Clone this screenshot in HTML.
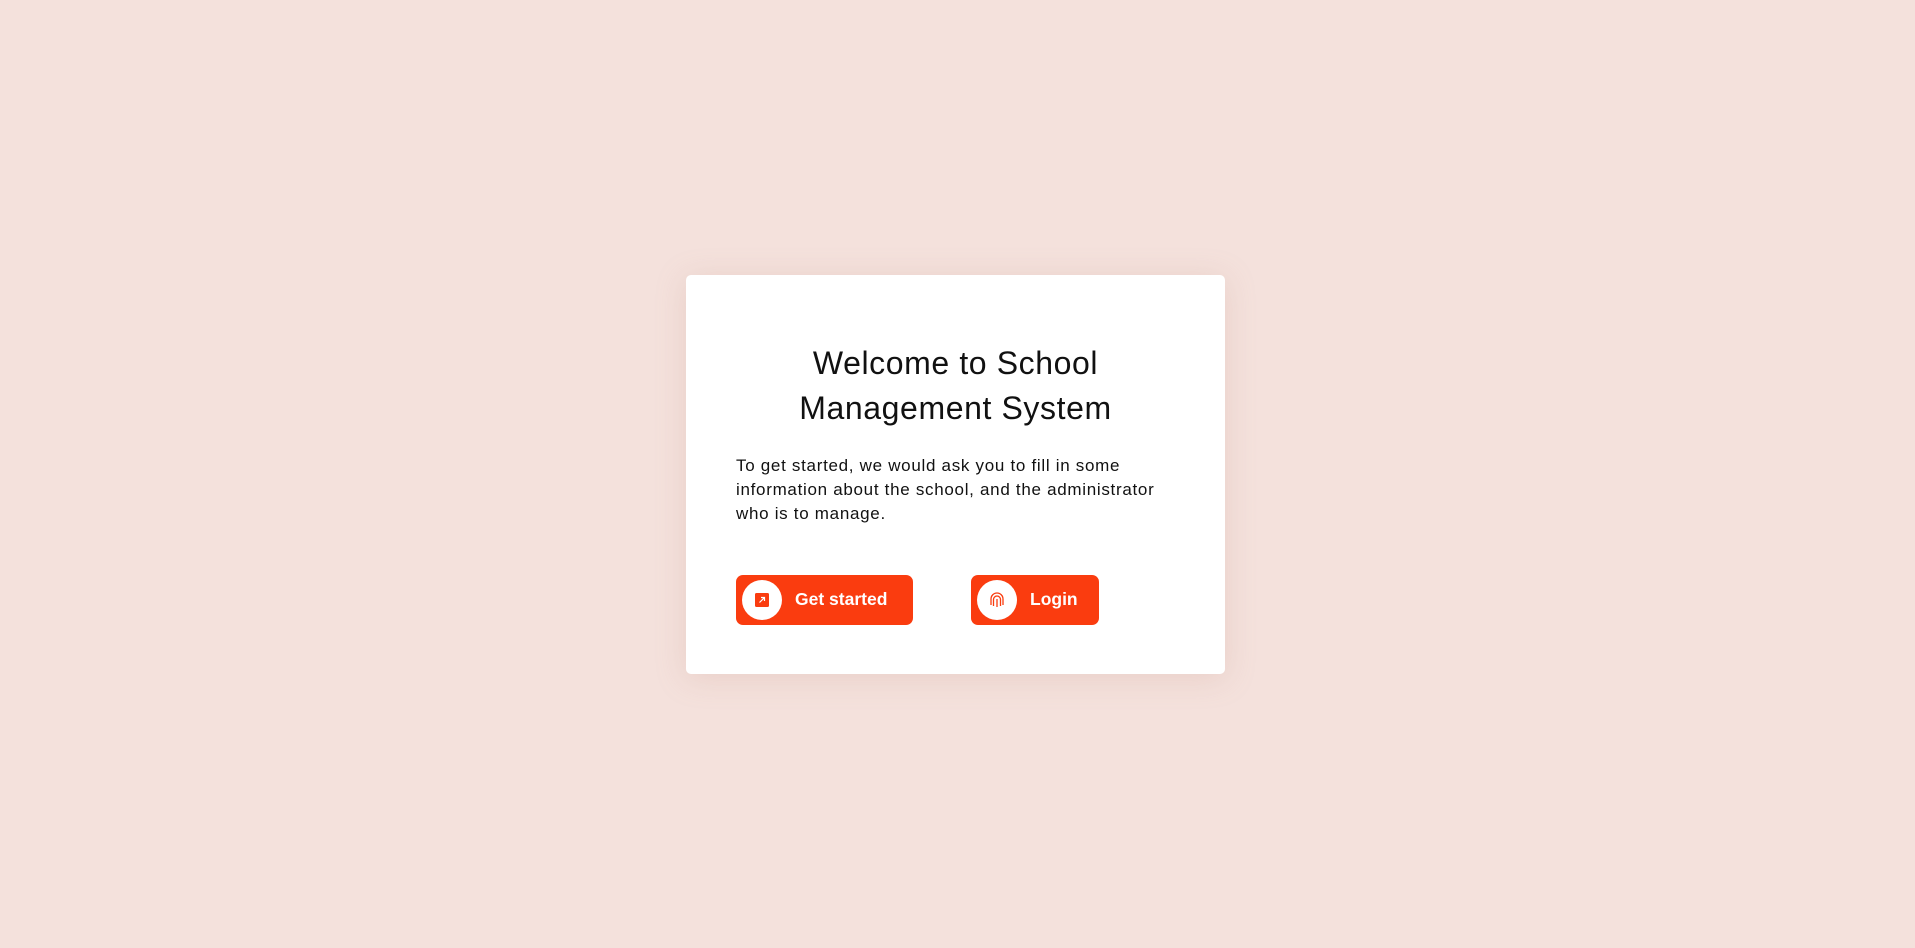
<!DOCTYPE html>
<html><head><style>
html,body{margin:0;padding:0;width:1915px;height:948px;background:#f4e1dc;font-family:"Liberation Sans",sans-serif;overflow:hidden}
.card{position:absolute;left:686px;top:275px;width:539px;height:399px;background:#fff;border-radius:5px;box-shadow:0 4px 30px rgba(200,150,140,0.25)}
.t{position:absolute;left:0;width:539px;text-align:center;font-size:32px;font-weight:normal;color:#111;letter-spacing:0.6px;line-height:40px}
p{position:absolute;left:50px;top:179px;margin:0;width:480px;font-size:17px;line-height:24px;color:#111;letter-spacing:0.7px}
.btn{position:absolute;top:300px;height:50px;background:#fa3c0f;border-radius:7px;color:#fff;font-weight:bold;font-size:17.5px}
.c{position:absolute;left:6px;top:5px;width:40px;height:40px;border-radius:50%;background:#fff}
.lbl{position:absolute;top:14px}
</style></head><body>
<div class="card">
<div class="t" style="top:68px">Welcome to School</div>
<div class="t" style="top:113px">Management System</div>
<p>To get started, we would ask you to fill in some<br>information about the school, and the administrator<br>who is to manage.</p>
<div class="btn" style="left:50px;width:177px">
<div class="c"><svg width="40" height="40"><rect x="13" y="13" width="14" height="14" rx="1.5" fill="#fa3c0f"/><path d="M17.5 22.5 L22.5 17.5 M19 17.5 H22.5 V21" stroke="#fff" stroke-width="1.2" fill="none"/></svg></div>
<span class="lbl" style="left:59px">Get started</span></div>
<div class="btn" style="left:285px;width:128px">
<div class="c"><svg width="40" height="40"><g stroke="#fa3c0f" stroke-width="1.3" fill="none"><path d="M14 25 V19 A6 6 0 0 1 26 19 V25"/><path d="M16.5 26 V19.5 A3.5 3.5 0 0 1 23.5 19.5 V26"/><path d="M20 27 V19"/></g></svg></div>
<span class="lbl" style="left:59px">Login</span></div>
</div>
</body></html>
